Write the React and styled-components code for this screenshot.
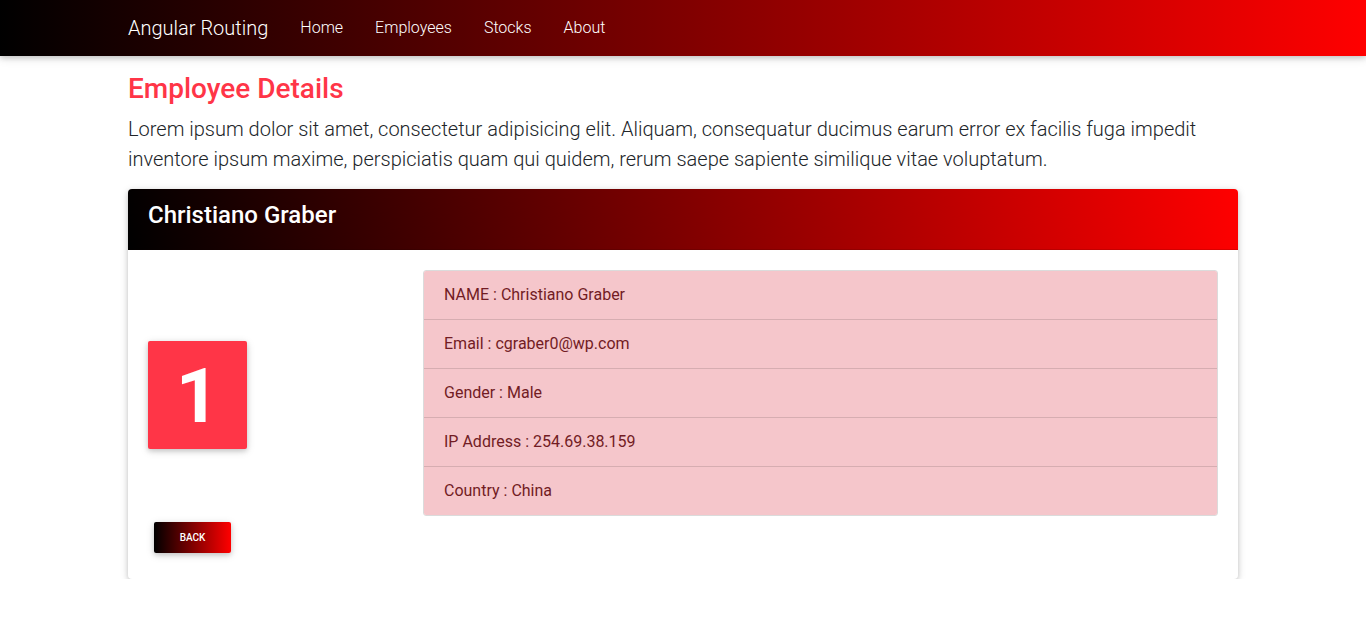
import styled, { createGlobalStyle } from "styled-components";

const GlobalStyle = createGlobalStyle`
  * { box-sizing: border-box; }
  body {
    margin: 0;
    font-family: Roboto, "Liberation Sans", sans-serif;
    font-weight: 300;
    color: #212529;
    background: #fff;
  }
`;

const Navbar = styled.nav`
  height: 56px;
  background: linear-gradient(to right, #000000, #ff0000);
  box-shadow: 0 2px 5px 0 rgba(0, 0, 0, 0.16), 0 2px 10px 0 rgba(0, 0, 0, 0.12);
  display: flex;
  align-items: center;
`;

const NavInner = styled.div`
  width: 1110px;
  margin: 0 auto;
  display: flex;
  align-items: center;
`;

const Brand = styled.a`
  font-size: 20px;
  font-weight: 300;
  color: #fff;
  margin-right: 16px;
  line-height: 30px;
`;

const NavLink = styled.a`
  font-size: 16px;
  font-weight: 300;
  color: #fff;
  padding: 8px 16px;
  line-height: 24px;
`;

const Container = styled.main`
  width: 1110px;
  margin: 0 auto;
  padding-top: 16px;
`;

const Title = styled.h3`
  margin: 0 0 8px;
  font-size: 28px;
  font-weight: 500;
  line-height: 1.2;
  color: #ff3547;
`;

const Lead = styled.p`
  margin: 0 0 15px;
  font-size: 20px;
  font-weight: 300;
  line-height: 30px;
`;

const Card = styled.div`
  border-radius: 4px;
  background: #fff;
  box-shadow: 0 2px 5px 0 rgba(0, 0, 0, 0.16), 0 2px 10px 0 rgba(0, 0, 0, 0.12);
  overflow: hidden;
`;

const CardHeader = styled.div`
  height: 61px;
  padding: 12px 20px;
  background: linear-gradient(80deg, #000000, #ff0000);
  border-bottom: 1px solid rgba(0, 0, 0, 0.125);
`;

const CardTitle = styled.h4`
  margin: 0;
  font-size: 24px;
  font-weight: 500;
  line-height: 1.2;
  color: #fff;
`;

const CardBody = styled.div`
  padding: 20px;
`;

const Row = styled.div`
  display: grid;
  grid-template-columns: 275px 1fr;
  align-items: center;
`;

const IdBox = styled.div`
  width: 99px;
  height: 108px;
  margin-top: 4px;
  background: #ff3547;
  border-radius: 2px;
  box-shadow: 0 2px 5px 0 rgba(0, 0, 0, 0.16), 0 2px 10px 0 rgba(0, 0, 0, 0.12);
  display: flex;
  align-items: center;
  justify-content: center;
  color: #fff;
  font-size: 76px;
  font-weight: 700;
  line-height: 1;
  padding-top: 2px;
`;

const List = styled.ul`
  list-style: none;
  margin: 0;
  padding: 0;
  border-radius: 3px;
  overflow: hidden;
  border: 1px solid rgba(0, 0, 0, 0.14);
`;

const Item = styled.li`
  padding: 12px 20px;
  background: #f5c6cb;
  color: #721c24;
  font-size: 16px;
  font-weight: 400;
  line-height: 24px;
  border-top: 1px solid rgba(0, 0, 0, 0.125);
  &:first-child { border-top: none; }
`;

const BackButton = styled.button`
  margin: 6px;
  width: 77px;
  height: 31px;
  border: none;
  border-radius: 2px;
  background: linear-gradient(to right, #000000, #ff0000);
  color: #fff;
  font-family: Roboto, "Liberation Sans", sans-serif;
  font-size: 10px;
  font-weight: 500;
  text-transform: uppercase;
  box-shadow: 0 2px 5px 0 rgba(0, 0, 0, 0.16), 0 2px 10px 0 rgba(0, 0, 0, 0.12);
  cursor: pointer;
`;

const employee = {
  id: 1,
  name: "Christiano Graber",
  email: "cgraber0@wp.com",
  gender: "Male",
  ip: "254.69.38.159",
  country: "China",
};

export default function App() {
  return (
    <>
      <GlobalStyle />
      <Navbar>
        <NavInner>
          <Brand>Angular Routing</Brand>
          <NavLink>Home</NavLink>
          <NavLink>Employees</NavLink>
          <NavLink>Stocks</NavLink>
          <NavLink>About</NavLink>
        </NavInner>
      </Navbar>
      <Container>
        <Title>Employee Details</Title>
        <Lead>
          Lorem ipsum dolor sit amet, consectetur adipisicing elit. Aliquam, consequatur ducimus earum error ex facilis fuga impedit
          inventore ipsum maxime, perspiciatis quam qui quidem, rerum saepe sapiente similique vitae voluptatum.
        </Lead>
        <Card>
          <CardHeader>
            <CardTitle>{employee.name}</CardTitle>
          </CardHeader>
          <CardBody>
            <Row>
              <IdBox>{employee.id}</IdBox>
              <List>
                <Item>NAME : {employee.name}</Item>
                <Item>Email : {employee.email}</Item>
                <Item>Gender : {employee.gender}</Item>
                <Item>IP Address : {employee.ip}</Item>
                <Item>Country : {employee.country}</Item>
              </List>
            </Row>
            <BackButton>Back</BackButton>
          </CardBody>
        </Card>
      </Container>
    </>
  );
}
